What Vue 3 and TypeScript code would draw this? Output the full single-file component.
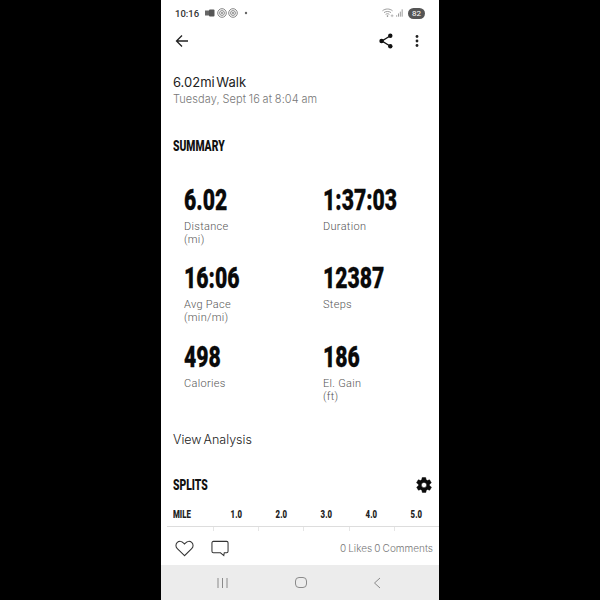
<template>
  <div class="screen">
    <div class="phone">
      <div class="status-bar">
        <span class="clock">10:16</span>
        <svg class="status-icons" viewBox="0 0 44 10" width="44" height="10">
          <rect x="0" y="2.5" width="5" height="5" fill="#666" />
          <rect x="4" y="1.5" width="5.5" height="7" rx="1" fill="#555" />
          <g fill="none" stroke="#777" stroke-width="0.9">
            <circle cx="17" cy="5" r="4.3" />
            <circle cx="17" cy="5" r="2.4" />
            <circle cx="28" cy="5" r="4.3" />
            <circle cx="28" cy="5" r="2.4" />
          </g>
          <circle cx="17" cy="5" r="0.9" fill="#777" />
          <circle cx="28" cy="5" r="0.9" fill="#777" />
          <circle cx="41" cy="5" r="1.2" fill="#666" />
        </svg>
        <span class="spacer"></span>
        <svg class="wifi" viewBox="0 0 24 10" width="22" height="10">
          <g fill="none" stroke="#888" stroke-width="0.9">
            <path d="M0.5 2.6C3.5 0 8.5 0 11.5 2.6" />
            <path d="M2.2 4.6C4.4 2.9 7.6 2.9 9.8 4.6" />
            <path d="M4 6.5C5.2 5.6 6.8 5.6 8 6.5" />
          </g>
          <circle cx="6" cy="8.4" r="0.9" fill="#888" />
          <path d="M9.5 8h3M11 6.5v3" stroke="#999" stroke-width="0.7" />
          <path d="M16 9V7.5M18 9V5.5M20 9V3.5M22 9V1" stroke="#888" stroke-width="0.9" />
        </svg>
        <span class="battery">82</span>
      </div>

      <header class="top-bar">
        <svg viewBox="0 0 14 14" width="14" height="14" fill="none" stroke="#222" stroke-width="1.3">
          <path d="M13 7H1.500M7 1.500 1.500 7 7 12.500" />
        </svg>
        <span class="spacer"></span>
        <svg class="share" viewBox="0 0 14 16" width="14" height="16" fill="#111">
          <path d="M11 3 3 8l8 5" fill="none" stroke="#111" stroke-width="1.4" />
          <circle cx="11.3" cy="2.8" r="2.2" />
          <circle cx="2.6" cy="8" r="2.3" />
          <circle cx="11.3" cy="13.2" r="2.2" />
        </svg>
        <svg viewBox="0 0 4 12" width="4" height="12" fill="#222">
          <circle cx="2" cy="1.5" r="1.4" />
          <circle cx="2" cy="6" r="1.4" />
          <circle cx="2" cy="10.5" r="1.4" />
        </svg>
      </header>

      <main class="content">
        <h1 class="title">6.02mi Walk</h1>
        <p class="subtitle">Tuesday, Sept 16 at 8:04 am</p>

        <h2 class="section-title summary-title">SUMMARY</h2>

        <div class="stats">
          <div v-for="stat in stats" :key="stat.label" class="stat">
            <div class="stat-value">{{ stat.value }}</div>
            <div class="stat-label">{{ stat.label }}</div>
            <div v-if="stat.unit" class="stat-label">{{ stat.unit }}</div>
          </div>
        </div>

        <a class="analysis">View Analysis</a>

        <div class="splits-head">
          <h2 class="section-title">SPLITS</h2>
          <svg viewBox="0 0 24 24" width="18" height="18" fill="#0c0c0c">
            <path d="M19.4 13a7.800 7.800 0 0 0 0-2l2.100-1.600a.5.5 0 0 0 .1-.6l-2-3.500a.5.5 0 0 0-.6-.2l-2.500 1a7.600 7.600 0 0 0-1.700-1l-.4-2.700a.5.5 0 0 0-.5-.4h-4a.5.5 0 0 0-.5.4l-.4 2.700a7.600 7.600 0 0 0-1.700 1l-2.500-1a.5.5 0 0 0-.6.2l-2 3.500a.5.5 0 0 0 .1.6L4.600 11a7.800 7.800 0 0 0 0 2l-2.100 1.600a.5.5 0 0 0-.1.6l2 3.500c.1.2.4.3.6.2l2.500-1a7.600 7.600 0 0 0 1.700 1l.4 2.700c0 .2.3.4.5.4h4c.2 0 .5-.2.5-.4l.4-2.700a7.600 7.600 0 0 0 1.700-1l2.500 1c.2.1.5 0 .6-.2l2-3.500a.5.5 0 0 0-.1-.6ZM12 15.500a3.500 3.500 0 1 1 0-7 3.500 3.500 0 0 1 0 7Z" stroke="#0c0c0c" stroke-width="0.6" />
          </svg>
        </div>

        <div class="splits-table">
          <div class="mile-cell"><span class="condensed">MILE</span></div>
          <div v-for="mile in miles" :key="mile" class="split-cell">
            <span class="condensed">{{ mile }}</span>
          </div>
        </div>
        <div class="split-ticks">
          <span v-for="mile in miles" :key="mile" class="tick"></span>
        </div>
      </main>

      <footer class="social-bar">
        <svg viewBox="0 0 20 18" width="19" height="17" fill="none" stroke="#333" stroke-width="1.1">
          <path d="M10 16.600 2.400 9.200C.4 7.200.5 4.200 2.400 2.500c1.900-1.600 4.800-1.300 6.400.5L10 4.200 11.200 3c1.600-1.800 4.500-2.100 6.400-.5 1.900 1.700 2 4.700 0 6.700Z" />
        </svg>
        <svg class="comment" viewBox="0 0 19 17" width="18" height="17" fill="none" stroke="#333" stroke-width="1.1">
          <path d="M2.500 1h14A1.500 1.500 0 0 1 18 2.500v9a1.500 1.500 0 0 1-1.500 1.500H14l-.5 3-3.500-3H2.500A1.500 1.500 0 0 1 1 11.500v-9A1.500 1.500 0 0 1 2.500 1Z" />
        </svg>
        <span class="spacer"></span>
        <span class="social-count">0 Likes 0 Comments</span>
      </footer>

      <nav class="nav-bar">
        <svg viewBox="0 0 11 10" width="11" height="10" stroke="#8a8a8a" stroke-width="1">
          <path d="M1 0v10M5.500 0v10M10 0v10" />
        </svg>
        <svg viewBox="0 0 12 11" width="12" height="11" fill="none" stroke="#8a8a8a" stroke-width="1">
          <rect x="0.500" y="0.500" width="11" height="10" rx="3.500" />
        </svg>
        <svg viewBox="0 0 8 12" width="8" height="12" fill="none" stroke="#8a8a8a" stroke-width="1">
          <path d="M7 1 1.500 6 7 11" />
        </svg>
      </nav>
    </div>
  </div>
</template>

<script setup lang="ts">
type Stat = {
  value: string
  label: string
  unit?: string
}

const stats: Stat[] = [
  { value: '6.02', label: 'Distance', unit: '(mi)' },
  { value: '1:37:03', label: 'Duration' },
  { value: '16:06', label: 'Avg Pace', unit: '(min/mi)' },
  { value: '12387', label: 'Steps' },
  { value: '498', label: 'Calories' },
  { value: '186', label: 'El. Gain', unit: '(ft)' }
]

const miles = ['1.0', '2.0', '3.0', '4.0', '5.0']
</script>

<style>
html,
body {
  margin: 0;
  background: #000;
}
</style>

<style scoped>
.screen {
  width: 600px;
  height: 600px;
  display: flex;
  justify-content: center;
  background: #000;
}

.phone {
  width: 278px;
  height: 600px;
  display: flex;
  flex-direction: column;
  background: #fff;
  overflow: hidden;
  font-family: Inter, "Noto Sans", sans-serif;
}

.spacer {
  flex: 1;
}

.status-bar {
  height: 14px;
  padding: 6px 14px 0;
  display: flex;
  align-items: center;
  gap: 4px;
}

.clock {
  font-family: Roboto, sans-serif;
  font-size: 9.500px;
  font-weight: 500;
  color: #333;
}

.status-icons {
  margin-left: 2px;
}

.battery {
  width: 17px;
  height: 11px;
  border-radius: 6px;
  background: #555;
  color: #fff;
  font-family: Roboto, sans-serif;
  font-size: 8px;
  line-height: 11px;
  text-align: center;
}

.top-bar {
  height: 16px;
  padding: 13px 20px 0 14px;
  display: flex;
  align-items: center;
}

.share {
  margin-right: 22px;
}

.content {
  flex: 1;
  min-height: 0;
  padding: 0 0 0 12px;
  overflow: hidden;
}

.title {
  margin: 24px 0 0;
  font-size: 13px;
  line-height: 18px;
  font-weight: 400;
  word-spacing: -2px;
  color: #222;
}

.subtitle {
  margin: 0;
  font-size: 11px;
  line-height: 16px;
  font-weight: 300;
  word-spacing: -0.5px;
  letter-spacing: 0.1px;
  color: #777;
}

.section-title {
  margin: 0;
  font-family: Roboto, sans-serif;
  font-size: 14px;
  line-height: 18px;
  font-weight: 900;
  color: #111;
  transform: scaleX(0.74);
  transform-origin: left center;
}

.summary-title {
  margin-top: 30px;
}

.stats {
  margin-top: 28px;
  padding-left: 11px;
  display: grid;
  grid-template-columns: 139px 1fr;
  grid-auto-rows: 78.400px;
}

.stat-value {
  font-family: Roboto, sans-serif;
  font-size: 29px;
  line-height: 34px;
  font-weight: 900;
  color: #0a0a0a;
  -webkit-text-stroke: 0.3px #0a0a0a;
  transform: scaleX(0.73);
  transform-origin: left center;
}

.stat-label {
  font-family: Roboto, sans-serif;
  font-size: 11px;
  line-height: 13px;
  font-weight: 300;
  letter-spacing: 0.3px;
  color: #555;
}

.stat-value + .stat-label {
  margin-top: 3px;
}

.analysis {
  display: block;
  margin-top: 13px;
  font-size: 12.500px;
  line-height: 18px;
  font-weight: 300;
  word-spacing: -1.500px;
  color: #222;
}

.splits-head {
  margin-top: 27px;
  padding-right: 6px;
  display: flex;
  align-items: center;
  justify-content: space-between;
  height: 18px;
}

.splits-table {
  margin: 15px 0 0 -6px;
  height: 17px;
  display: grid;
  grid-template-columns: 46px repeat(5, 45px);
  border-bottom: 1px solid #ddd;
  font-family: Roboto, sans-serif;
  font-size: 10px;
  line-height: 12px;
  font-weight: 900;
  color: #222;
}

.condensed {
  display: inline-block;
  transform: scaleX(0.78);
}

.mile-cell {
  padding-left: 6px;
}

.mile-cell .condensed {
  transform-origin: left center;
}

.split-cell {
  padding-left: 2px;
  text-align: center;
}

.split-ticks {
  margin-left: 40px;
  height: 4px;
  display: flex;
}

.tick {
  width: 45px;
  border-left: 1px solid #e6e6e6;
}

.social-bar {
  height: 34px;
  padding: 0 6px 0 14px;
  display: flex;
  align-items: center;
}

.comment {
  margin-left: 17px;
}

.social-count {
  font-size: 10px;
  font-weight: 300;
  word-spacing: -0.7px;
  color: #777;
}

.nav-bar {
  height: 35px;
  padding: 0 58px 0 56px;
  display: flex;
  align-items: center;
  justify-content: space-between;
  background: #ececec;
}
</style>
